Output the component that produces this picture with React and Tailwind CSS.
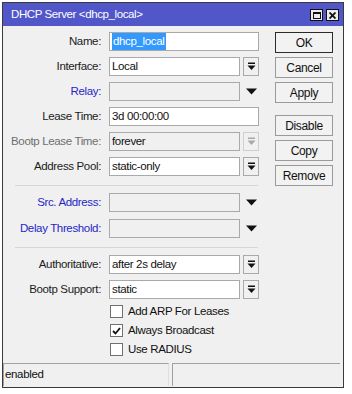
import React from "react";

const font = { fontFamily: '"Liberation Sans", Arial, sans-serif' };

function DropIcon({ dim }) {
  const c = dim ? "#a8a8a8" : "#111";
  return (
    <svg width="9" height="9" viewBox="0 0 9 9">
      <rect x="1" y="0.5" width="7" height="1.5" fill={c} />
      <polygon points="0.5,3.5 8.5,3.5 4.5,8" fill={c} />
    </svg>
  );
}

function Arrow() {
  return (
    <svg width="11" height="7" viewBox="0 0 11 7">
      <polygon points="0,0.5 11,0.5 5.5,6.5" fill="#111" />
    </svg>
  );
}

function Label({ children, color = "text-[#1b1b1b]" }) {
  return (
    <div className={`w-[101px] shrink-0 pr-[3px] text-right ${color}`}>{children}</div>
  );
}

function Row({ label, color, children, className = "" }) {
  return (
    <div className={`flex items-center h-[19px] ${className}`}>
      <Label color={color}>{label}</Label>
      <div className="ml-[5px] flex items-center h-full">{children}</div>
    </div>
  );
}

function Field({ value, wide, disabled, children }) {
  return (
    <div
      className={`h-[19px] ${wide ? "w-[150px]" : "w-[131px]"} border border-[#a9a9a9] ${
        disabled ? "bg-[#f0f0f0]" : "bg-white"
      } flex items-center pl-[2px] text-[#111] overflow-hidden whitespace-nowrap`}
    >
      {children || value}
    </div>
  );
}

function DropBtn({ dim }) {
  return (
    <div
      className={`ml-[3px] h-[19px] w-[16px] border ${
        dim ? "border-[#cfcfcf]" : "border-[#a9a9a9]"
      } bg-[#f0f0f0] flex items-center justify-center`}
    >
      <DropIcon dim={dim} />
    </div>
  );
}

function Btn({ children, focus, className = "" }) {
  return (
    <div
      className={`w-[58px] h-[21px] border ${
        focus ? "border-[#2b2b2b]" : "border-[#9a9a9a]"
      } bg-[#f2f2f2] flex items-center justify-center text-[12px] text-[#111] ${className}`}
    >
      {children}
    </div>
  );
}

function Check({ label, checked }) {
  return (
    <div className="flex items-center h-[19px] pl-[107px]">
      <div className="w-[13px] h-[13px] border border-[#707070] bg-white flex items-center justify-center">
        {checked && (
          <svg width="9" height="8" viewBox="0 0 9 8">
            <polyline points="1,4 3.5,6.5 8,1" fill="none" stroke="#111" strokeWidth="1.8" />
          </svg>
        )}
      </div>
      <span className="ml-[5px] text-[#111]">{label}</span>
    </div>
  );
}

export default function App() {
  return (
    <div className="w-[352px] h-[394px] bg-white pl-[2px] pt-[2px]" style={font}>
      <div className="w-[342px] h-[386px] border border-[#3a3a3a] bg-[#f0f0f0] flex flex-col text-[11.5px] tracking-[-0.35px]">
        <div className="h-[23px] shrink-0 bg-[#5157c9] flex items-center pl-[8px] pr-[4px]">
          <span className="text-white text-[11.5px] tracking-[-0.4px]">DHCP Server &lt;dhcp_local&gt;</span>
          <div className="ml-auto flex gap-[3px] mt-[1px]">
            <div className="w-[13px] h-[12px] border border-[#111] bg-[#ececec] flex items-center justify-center">
              <div className="w-[8px] h-[7px] border border-[#111] border-t-2"></div>
            </div>
            <div className="w-[13px] h-[12px] border border-[#111] bg-[#ececec] flex items-center justify-center">
              <svg width="7" height="7" viewBox="0 0 7 7">
                <path d="M0.5 0.5 L6.5 6.5 M6.5 0.5 L0.5 6.5" stroke="#111" strokeWidth="1.8" />
              </svg>
            </div>
          </div>
        </div>

        <div className="flex-1 flex">
          <div className="w-[258px] flex flex-col pt-[6px]">
            <div className="flex flex-col gap-[6px]">
              <Row label="Name:">
                <Field wide>
                  <span className="bg-[#3399ff] text-white px-[1px]">dhcp_local</span>
                </Field>
              </Row>
              <Row label="Interface:">
                <Field value="Local" />
                <DropBtn />
              </Row>
              <Row label="Relay:" color="text-[#2626c8]">
                <Field disabled />
                <div className="ml-[3px] w-[16px] flex justify-center">
                  <Arrow />
                </div>
              </Row>
              <Row label="Lease Time:">
                <Field wide value="3d 00:00:00" />
              </Row>
              <Row label="Bootp Lease Time:" color="text-[#6e6e6e]">
                <Field disabled value="forever" />
                <DropBtn dim />
              </Row>
              <Row label="Address Pool:">
                <Field value="static-only" />
                <DropBtn />
              </Row>
            </div>

            <div className="mt-[9px] ml-[12px] w-[243px] h-px bg-[#d6d6d6]"></div>

            <div className="mt-[7px] flex flex-col gap-[7px]">
              <Row label="Src. Address:" color="text-[#2626c8]">
                <Field disabled />
                <div className="ml-[3px] w-[16px] flex justify-center">
                  <Arrow />
                </div>
              </Row>
              <Row label="Delay Threshold:" color="text-[#2626c8]">
                <Field disabled />
                <div className="ml-[3px] w-[16px] flex justify-center">
                  <Arrow />
                </div>
              </Row>
            </div>

            <div className="mt-[9px] ml-[12px] w-[243px] h-px bg-[#d6d6d6]"></div>

            <div className="mt-[7px] flex flex-col gap-[6px]">
              <Row label="Authoritative:">
                <Field value="after 2s delay" />
                <DropBtn />
              </Row>
              <Row label="Bootp Support:">
                <Field value="static" />
                <DropBtn />
              </Row>
            </div>

            <div className="mt-[3px] flex flex-col">
              <Check label="Add ARP For Leases" />
              <Check label="Always Broadcast" checked />
              <Check label="Use RADIUS" />
            </div>
          </div>

          <div className="ml-[14px] pt-[6px] flex flex-col">
            <Btn focus>OK</Btn>
            <Btn className="mt-[4px]">Cancel</Btn>
            <Btn className="mt-[4px]">Apply</Btn>
            <Btn className="mt-[12px]">Disable</Btn>
            <Btn className="mt-[4px]">Copy</Btn>
            <Btn className="mt-[4px]">Remove</Btn>
          </div>
        </div>

        <div className="h-[24px] shrink-0 flex gap-[3px] pr-[3px]">
          <div className="w-[166px] h-[23px] border-t border-l border-[#a0a0a0] border-r border-r-[#e0e0e0] flex items-center pl-[1px] text-[#111]">
            enabled
          </div>
          <div className="flex-1 h-[23px] border-t border-l border-[#a0a0a0]"></div>
        </div>
      </div>
    </div>
  );
}
